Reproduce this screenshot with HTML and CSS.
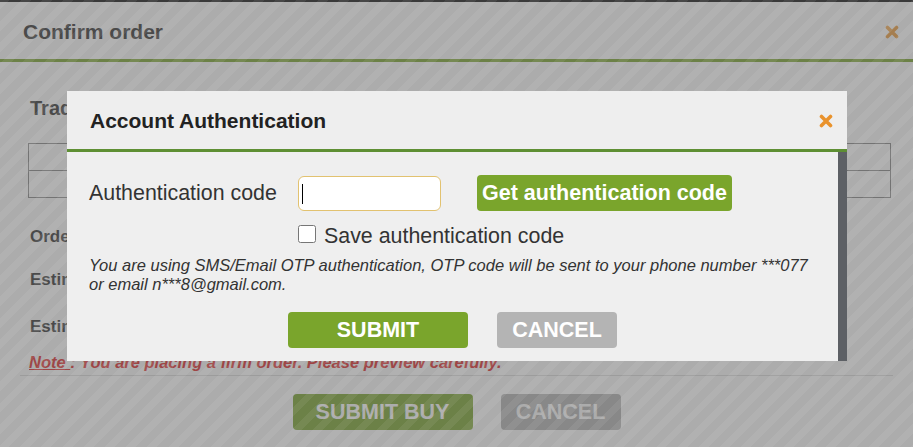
FILE: index.html
```html
<!DOCTYPE html>
<html lang="en">
<head>
    <meta charset="UTF-8">
    <meta name="viewport" content="width=device-width, initial-scale=1.0">
    <title>Confirm order</title>
    <link rel="stylesheet" href="styles.css">
</head>
<body>
    <div class="order-dialog">
        <div class="order-head">
            <h1>Confirm order</h1>
            <span class="close-icon order-close">
                <svg width="14" height="14" viewBox="0 0 14 14"><path d="M2.5 2.5 L11.5 11.5 M11.5 2.5 L2.5 11.5" stroke="#e9922c" stroke-width="3.6" stroke-linecap="round"/></svg>
            </span>
        </div>

        <div class="order-body">
            <h2>Trading account</h2>
            <table class="order-table">
                <tr><td>&nbsp;</td><td>&nbsp;</td><td>&nbsp;</td></tr>
                <tr><td>&nbsp;</td><td>&nbsp;</td><td>&nbsp;</td></tr>
            </table>

            <div class="info-row first">Order type</div>
            <div class="info-row">Estimated amount</div>
            <div class="info-row last">Estimated total</div>

            <p class="note"><u>Note </u>: You are placing a firm order. Please preview carefully.</p>

            <div class="order-actions">
                <button class="btn btn-green btn-wide">SUBMIT BUY</button>
                <button class="btn btn-gray">CANCEL</button>
            </div>
        </div>
    </div>

    <div class="overlay"></div>

    <div class="auth-dialog">
        <div class="auth-head">
            <h3>Account Authentication</h3>
            <span class="close-icon">
                <svg width="14" height="14" viewBox="0 0 14 14"><path d="M2.5 2.5 L11.5 11.5 M11.5 2.5 L2.5 11.5" stroke="#e9922c" stroke-width="3.6" stroke-linecap="round"/></svg>
            </span>
        </div>
        <div class="auth-content">
            <div class="auth-main">
                <div class="code-row">
                    <label for="auth-code">Authentication code</label>
                    <span class="code-field">
                        <input type="text" id="auth-code">
                        <span class="caret"></span>
                    </span>
                    <button class="btn btn-green btn-get">Get authentication code</button>
                </div>
                <div class="save-row">
                    <input type="checkbox" id="save-code">
                    <label for="save-code">Save authentication code</label>
                </div>
                <p class="otp-info">You are using SMS/Email OTP authentication, OTP code will be sent to your phone number ***077 or email n***8@gmail.com.</p>
                <div class="auth-actions">
                    <button class="btn btn-green btn-wide">SUBMIT</button>
                    <button class="btn btn-gray">CANCEL</button>
                </div>
            </div>
        </div>
    </div>
</body>
</html>
```

FILE: styles.css
```css
body {
    margin: 0;
    padding: 0;
    font-family: "Liberation Sans", Arial, sans-serif;
    color: #333;
    background: #fff;
    overflow: hidden;
}

.order-dialog {
    width: 913px;
    height: 447px;
    border-top: 2px solid #111;
    box-sizing: border-box;
}

.order-head {
    height: 60px;
    display: flex;
    align-items: center;
    justify-content: space-between;
    padding: 2px 14px 0 23px;
    box-sizing: border-box;
    border-bottom: 3px solid #7aa52c;
}

.order-head h1 {
    margin: 0;
    font-size: 21px;
    font-weight: bold;
    color: #333;
}

.close-icon {
    display: flex;
    width: 14px;
    height: 14px;
}

.order-close svg path {
    stroke: #f0a040;
}

.order-body {
    padding: 34px 20px 0 20px;
}

.order-body h2 {
    margin: 0 0 0 10px;
    font-size: 20px;
    line-height: 24px;
    color: #333;
}

.order-table {
    margin: 23px 0 0 8px;
    width: 863px;
    border-collapse: collapse;
}

.order-table td {
    border: 1px solid #888;
    height: 26px;
    padding: 0 6px;
    font-size: 14px;
}

.info-row {
    margin: 23px 0 0 10px;
    height: 20px;
    line-height: 20px;
    font-size: 17px;
    font-weight: bold;
    color: #333;
}

.info-row.first {
    margin-top: 29px;
}

.info-row.last {
    margin-top: 27px;
}

.note {
    margin: 15px 0 0 0;
    padding: 0 0 3px 9px;
    line-height: 20px;
    font-size: 16.5px;
    font-weight: bold;
    font-style: italic;
    color: #e22a2a;
    border-bottom: 1px solid #ddd;
}

.order-actions {
    margin-top: 18px;
    display: flex;
    justify-content: center;
    gap: 28px;
}

.btn {
    height: 36px;
    border: none;
    border-radius: 4px;
    font-family: "Liberation Sans", Arial, sans-serif;
    font-size: 21.5px;
    font-weight: bold;
    color: #fff;
    cursor: pointer;
    padding: 0;
}

.btn-green {
    background-color: #7aa52c;
}

.btn-gray {
    background-color: #b4b4b4;
    width: 120px;
}

.btn-wide {
    width: 180px;
}

.overlay {
    position: fixed;
    inset: 0;
    background-color: rgba(95, 95, 95, 0.52);
    background-image: repeating-linear-gradient(135deg, rgba(255, 255, 255, 0.07) 0 7px, rgba(255, 255, 255, 0) 7px 15px);
}

.auth-dialog {
    position: absolute;
    left: 67px;
    top: 91px;
    width: 780px;
    background: #efefef;
}

.auth-head {
    height: 61px;
    display: flex;
    align-items: center;
    justify-content: space-between;
    padding: 2px 14px 0 23px;
    box-sizing: border-box;
    border-bottom: 3px solid #5e8f33;
    background: #eeeeee;
}

.auth-head h3 {
    margin: 0;
    font-size: 21px;
    font-weight: bold;
    color: #222;
}

.auth-content {
    display: flex;
}

.auth-main {
    flex: 1;
    padding: 23px 22px 13px 22px;
    border-right: 9px solid #5d6065;
}

.code-row {
    display: flex;
    align-items: center;
}

.code-row label {
    width: 209px;
    font-size: 21.4px;
    color: #333;
}

.code-field {
    position: relative;
    display: flex;
}

.code-field input {
    width: 143px;
    height: 35px;
    box-sizing: border-box;
    border: 1px solid #e2c270;
    border-radius: 6px;
    background: #fff;
    padding: 0 4px;
    font-size: 18px;
    outline: none;
}

.caret {
    position: absolute;
    left: 4px;
    top: 8px;
    width: 1px;
    height: 20px;
    background: #000;
}

.btn-get {
    margin-left: 36px;
    width: 255px;
}

.save-row {
    margin: 13px 0 0 209px;
    display: flex;
    align-items: center;
    gap: 8px;
    height: 24px;
}

.save-row input {
    width: 18px;
    height: 18px;
    margin: 0 0 5px 0;
}

.save-row label {
    font-size: 21.4px;
    color: #333;
}

.otp-info {
    margin: 8px 0 0 0;
    font-size: 16.5px;
    line-height: 19px;
    font-style: italic;
    color: #333;
}

.auth-actions {
    margin-top: 18px;
    display: flex;
    justify-content: center;
    gap: 29px;
}
```
